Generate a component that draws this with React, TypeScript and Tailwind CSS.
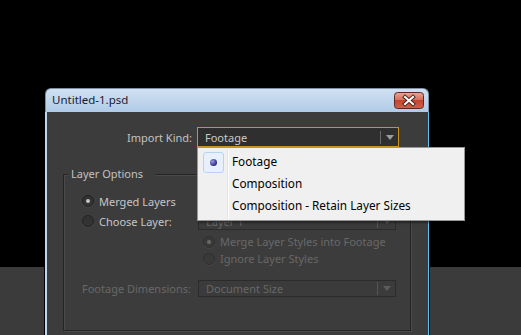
import React from "react";

const font = "font-['Noto_Sans','Liberation_Sans',sans-serif]";

function Radio({ checked, disabled }: { checked?: boolean; disabled?: boolean }) {
  return (
    <span
      className={`flex h-[12px] w-[12px] shrink-0 items-center justify-center rounded-full border ${
        disabled ? "border-[#2f2f2f] bg-[#393939]" : "border-[#232323] bg-[#333333]"
      } shadow-[0_1px_0_rgba(255,255,255,0.06)]`}
    >
      {checked && (
        <span className={`h-[4px] w-[4px] rounded-full ${disabled ? "bg-[#6a6a6a]" : "bg-[#c4c4c4]"}`} />
      )}
    </span>
  );
}

function Arrow({ color }: { color: string }) {
  return (
    <svg width="8" height="5" viewBox="0 0 8 5">
      <path d="M0 0h8L4 5z" fill={color} />
    </svg>
  );
}

function Select({ label, disabled, focused, className }: { label: string; disabled?: boolean; focused?: boolean; className: string }) {
  return (
    <div
      className={`flex items-center border ${
        focused ? "border-[#c8941c] bg-[#2f2f2f]" : "border-[#2b2b2b] bg-[#3b3b3b]"
      } ${className}`}
    >
      <span className={`flex-1 whitespace-nowrap pl-[7px] ${disabled ? "text-[#686868]" : "text-[#c9c9c9]"}`}>{label}</span>
      <span className={`h-[13px] w-px ${disabled ? "bg-[#555555]" : "bg-[#6a6a6a]"}`} />
      <span className="flex w-[17px] items-center justify-center">
        <Arrow color={disabled ? "#5c5c5c" : "#9c9c9c"} />
      </span>
    </div>
  );
}

function MenuItem({ text, checked }: { text: string; checked?: boolean }) {
  return (
    <div className="flex h-[22px] items-center">
      <div className="flex w-[24px] justify-center">
        {checked && (
          <div className="flex h-[21px] w-[21px] items-center justify-center rounded-[3px] border border-[#b7d3f3] bg-[#e8f1fb]">
            <span className="h-[7px] w-[7px] rounded-full bg-[radial-gradient(circle_at_35%_35%,#9a9ae0,#2a2a8a_70%)]" />
          </div>
        )}
      </div>
      <span className="whitespace-nowrap pl-[7px] text-[11.75px] text-[#000000]">{text}</span>
    </div>
  );
}

export default function App() {
  return (
    <div className={`relative h-[335px] w-[521px] overflow-hidden bg-black text-[11px] leading-none ${font}`}>
      <div className="h-[267px] bg-black" />
      <div className="h-[68px] bg-[#3b3b3b]" />

      {/* dialog window */}
      <div className="absolute left-[45px] top-[88px] w-[384px] shadow-[0_0_0_1px_#000]">
        {/* title bar */}
        <div className="flex h-[24px] items-center justify-between rounded-t-[6px] border-x border-t border-[#7d8fa3] bg-gradient-to-b from-[#cfe0f2] to-[#b1cbe7] pl-[6px] pr-[4px]">
          <span className="pb-[1px] text-[11.5px] text-[#1a1a2e]">Untitled-1.psd</span>
          <svg width="30" height="17" viewBox="0 0 30 17" className="mt-[-1px]">
            <defs>
              <linearGradient id="cb" x1="0" y1="0" x2="0" y2="1">
                <stop offset="0" stopColor="#e9a697" />
                <stop offset="0.45" stopColor="#d7705e" />
                <stop offset="0.5" stopColor="#c5452f" />
                <stop offset="1" stopColor="#d0604a" />
              </linearGradient>
            </defs>
            <rect x="0.5" y="0.5" width="29" height="16" rx="3" fill="url(#cb)" stroke="#5e2a24" />
            <path d="M11 5l8 7M19 5l-8 7" stroke="#4a2420" strokeWidth="4" strokeLinecap="square" />
            <path d="M11 5l8 7M19 5l-8 7" stroke="#ffffff" strokeWidth="2" strokeLinecap="square" />
          </svg>
        </div>

        {/* client area */}
        <div className="h-[236px] border-l-2 border-r border-l-[#b9d7f1] border-r-[#5ec0ec] bg-[#3c3c3c] pt-[15px]">
          <div className="flex items-center">
            <span className="w-[145px] whitespace-nowrap text-right text-[#c2c2c2]">Import Kind:</span>
            <div className="relative ml-[5px]">
              <Select label="Footage" focused className="h-[20px] w-[202px]" />

              {/* open dropdown list */}
              <div className="absolute left-0 top-full z-10 w-[268px] border border-[#979797] bg-[#f0f0f0] p-[3px] shadow-[2px_2px_2px_rgba(0,0,0,0.4)]">
                <div className="absolute bottom-[2px] left-[29px] top-[2px] w-px bg-[#e2e3e3]" />
                <div className="absolute bottom-[2px] left-[30px] top-[2px] w-px bg-white" />
                <MenuItem text="Footage" checked />
                <MenuItem text="Composition" />
                <MenuItem text="Composition - Retain Layer Sizes" />
              </div>
            </div>
          </div>

          {/* Layer Options group */}
          <div className="relative ml-[16px] mt-[27px] h-[157px] w-[348px] border border-[#252525] shadow-[1px_1px_0_#4a4a4a,inset_1px_1px_0_#4a4a4a]">
            <span className="absolute left-[4px] top-[-7px] whitespace-nowrap bg-[#3c3c3c] pl-[3px] pr-[12px] text-[#c2c2c2]">Layer Options</span>

            <div className="pl-[18px] pt-[16px]">
              <div className="flex h-[20px] items-center">
                <Radio checked />
                <span className="whitespace-nowrap pl-[5px] text-[#c6c6c6]">Merged Layers</span>
              </div>
              <div className="flex h-[20px] items-center">
                <div className="flex w-[116px] items-center">
                  <Radio />
                  <span className="whitespace-nowrap pl-[5px] text-[#c6c6c6]">Choose Layer:</span>
                </div>
                <Select label="Layer 1" disabled className="h-[17px] w-[198px]" />
              </div>

              <div className="mt-[2px] pl-[121px]">
                <div className="flex h-[17px] items-center">
                  <Radio checked disabled />
                  <span className="whitespace-nowrap pl-[5px] text-[#686868]">Merge Layer Styles into Footage</span>
                </div>
                <div className="flex h-[17px] items-center">
                  <Radio disabled />
                  <span className="whitespace-nowrap pl-[5px] text-[#686868]">Ignore Layer Styles</span>
                </div>
              </div>

              <div className="mt-[13px] flex h-[17px] items-center">
                <span className="w-[116px] whitespace-nowrap text-[#686868]">Footage Dimensions:</span>
                <Select label="Document Size" disabled className="h-[17px] w-[198px]" />
              </div>
            </div>
          </div>
        </div>
      </div>
    </div>
  );
}
